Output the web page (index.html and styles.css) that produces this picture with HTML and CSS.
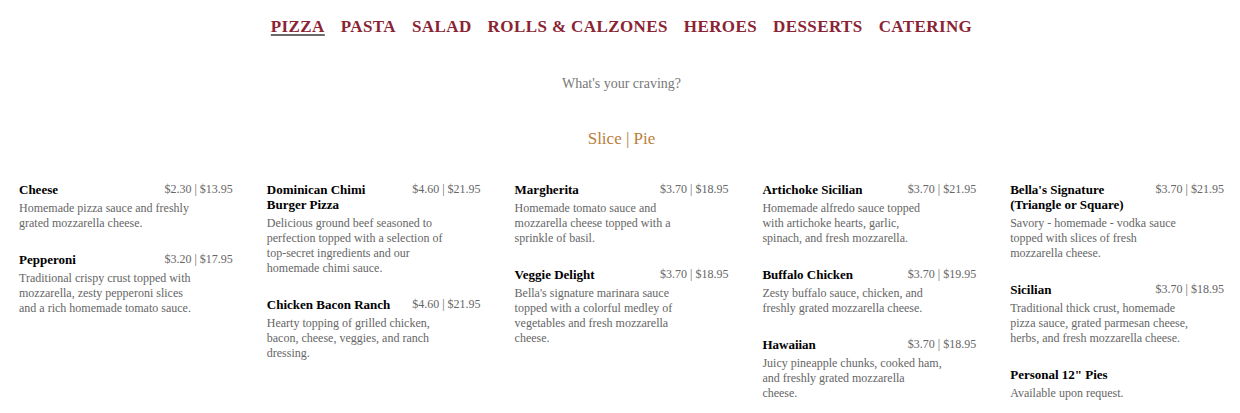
FILE: index.html
```html
<!DOCTYPE html>
<html>
  <head>
    <meta charset="UTF-8">
    <title>Menu - Pizza</title>
	<link rel="stylesheet" href="styles.css">
  </head>
  <body>

	<div id="mother">

	<nav class="menu-nav">
		<a href="#" class="nav-link active">Pizza</a>
		<a href="#" class="nav-link">Pasta</a>
		<a href="#" class="nav-link">Salad</a>
		<a href="#" class="nav-link">Rolls &amp; Calzones</a>
		<a href="#" class="nav-link">Heroes</a>
		<a href="#" class="nav-link">Desserts</a>
		<a href="#" class="nav-link">Catering</a>
	</nav>

	<p class="craving">What's your craving?</p>
	<p class="size-key">Slice | Pie</p>

	<div class="menu-grid">

		<div class="menu-col">
			<div class="item">
				<div class="item-head"><span class="item-name">Cheese</span><span class="item-price">$2.30 | $13.95</span></div>
				<p class="item-desc">Homemade pizza sauce and freshly grated mozzarella cheese.</p>
			</div>
			<div class="item">
				<div class="item-head"><span class="item-name">Pepperoni</span><span class="item-price">$3.20 | $17.95</span></div>
				<p class="item-desc">Traditional crispy crust topped with mozzarella, zesty pepperoni slices and a rich homemade tomato sauce.</p>
			</div>
		</div>

		<div class="menu-col">
			<div class="item">
				<div class="item-head"><span class="item-name">Dominican Chimi Burger Pizza</span><span class="item-price">$4.60 | $21.95</span></div>
				<p class="item-desc">Delicious ground beef seasoned to perfection topped with a selection of top-secret ingredients and our homemade chimi sauce.</p>
			</div>
			<div class="item">
				<div class="item-head"><span class="item-name">Chicken Bacon Ranch</span><span class="item-price">$4.60 | $21.95</span></div>
				<p class="item-desc">Hearty topping of grilled chicken, bacon, cheese, veggies, and ranch dressing.</p>
			</div>
		</div>

		<div class="menu-col">
			<div class="item">
				<div class="item-head"><span class="item-name">Margherita</span><span class="item-price">$3.70 | $18.95</span></div>
				<p class="item-desc">Homemade tomato sauce and mozzarella cheese topped with a sprinkle of basil.</p>
			</div>
			<div class="item">
				<div class="item-head"><span class="item-name">Veggie Delight</span><span class="item-price">$3.70 | $18.95</span></div>
				<p class="item-desc">Bella's signature marinara sauce topped with a colorful medley of vegetables and fresh mozzarella cheese.</p>
			</div>
		</div>

		<div class="menu-col">
			<div class="item">
				<div class="item-head"><span class="item-name">Artichoke Sicilian</span><span class="item-price">$3.70 | $21.95</span></div>
				<p class="item-desc">Homemade alfredo sauce topped with artichoke hearts, garlic, spinach, and fresh mozzarella.</p>
			</div>
			<div class="item">
				<div class="item-head"><span class="item-name">Buffalo Chicken</span><span class="item-price">$3.70 | $19.95</span></div>
				<p class="item-desc">Zesty buffalo sauce, chicken, and freshly grated mozzarella cheese.</p>
			</div>
			<div class="item">
				<div class="item-head"><span class="item-name">Hawaiian</span><span class="item-price">$3.70 | $18.95</span></div>
				<p class="item-desc">Juicy pineapple chunks, cooked ham, and freshly grated mozzarella cheese.</p>
			</div>
		</div>

		<div class="menu-col">
			<div class="item">
				<div class="item-head"><span class="item-name">Bella's Signature (Triangle or Square)</span><span class="item-price">$3.70 | $21.95</span></div>
				<p class="item-desc">Savory - homemade - vodka sauce topped with slices of fresh mozzarella cheese.</p>
			</div>
			<div class="item">
				<div class="item-head"><span class="item-name">Sicilian</span><span class="item-price">$3.70 | $18.95</span></div>
				<p class="item-desc">Traditional thick crust, homemade pizza sauce, grated parmesan cheese, herbs, and fresh mozzarella cheese.</p>
			</div>
			<div class="item">
				<div class="item-head"><span class="item-name">Personal 12" Pies</span></div>
				<p class="item-desc">Available upon request.</p>
			</div>
		</div>

	</div>

	</div>

  </body>
</html>
```

FILE: styles.css
```css
 * {
	margin: 0px;
	padding: 0px;
	border-style: none;
 }
 html, body {
	background-color: #ffffff;
	font-family: "Liberation Serif", "Times New Roman", serif;
 }
 #mother {
	padding: 17px 16px 0px 19px;
 }
 .menu-nav {
	display: flex;
	justify-content: center;
	gap: 16px;
	line-height: 20px;
 }
 .nav-link {
	color: #8a2434;
	font-size: 17px;
	font-weight: bold;
	text-transform: uppercase;
	letter-spacing: 0.4px;
	text-decoration: none;
 }
 .nav-link.active {
	text-decoration: underline;
	text-decoration-color: #6b6b6b;
	text-decoration-thickness: 2px;
	text-underline-offset: 2px;
 }
 .craving {
	margin-top: 38px;
	text-align: center;
	font-size: 14px;
	line-height: 18px;
	color: #777777;
 }
 .size-key {
	margin-top: 36px;
	text-align: center;
	font-size: 17px;
	line-height: 20px;
	color: #b9803c;
 }
 .menu-grid {
	display: grid;
	grid-template-columns: repeat(5, 1fr);
	column-gap: 34px;
	margin-top: 33px;
 }
 .item {
	margin-bottom: 21px;
 }
 .item-head {
	display: flex;
	justify-content: space-between;
	align-items: flex-start;
	gap: 10px;
 }
 .item-name {
	flex: 1;
	font-size: 13px;
	font-weight: bold;
	line-height: 15px;
	color: #000000;
 }
 .item-price {
	font-size: 12px;
	line-height: 15px;
	color: #666666;
	white-space: nowrap;
 }
 .item-desc {
	max-width: 84%;
	margin-top: 4px;
	font-size: 12px;
	line-height: 15px;
	color: #666666;
 }
```
